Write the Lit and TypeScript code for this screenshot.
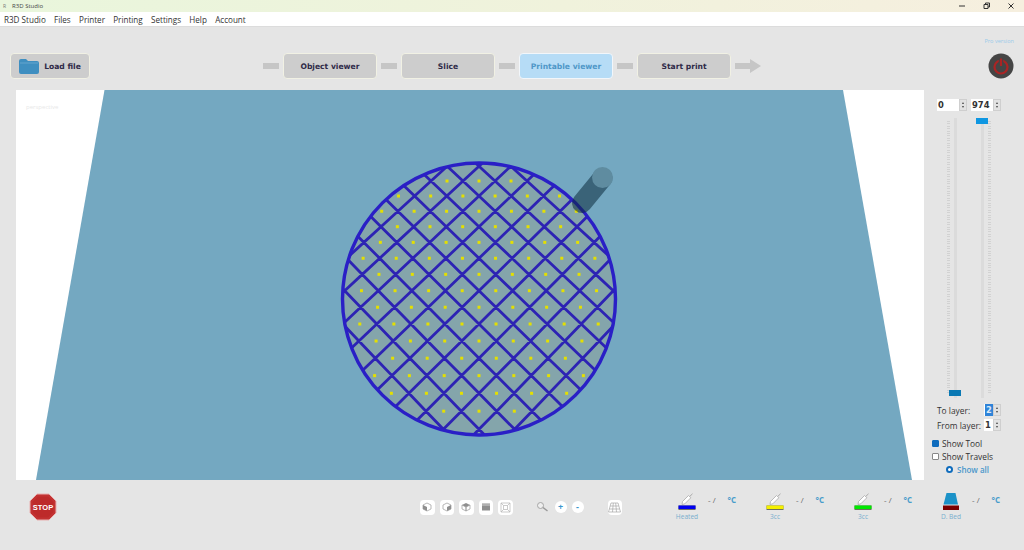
import { LitElement, css, html, svg } from "lit";
import { customElement } from "lit/decorators.js";

const steps = [
  { label: "Object viewer" },
  { label: "Slice" },
  { label: "Printable viewer", active: true },
  { label: "Start print" },
];

const tools = [
  { label: "Heated", bar: "#0000f0" },
  { label: "3cc", bar: "#f4f000" },
  { label: "3cc", bar: "#00e800" },
];

// grid of the printed layer, rows run from the far side to the near side
const rowY = (r: number) => 181 + 14.9 * r + 0.11 * r * r;
const stepX = (y: number) => 16 + (y - 181) * 0.0072;
const gridX = (m: number, y: number) => 479 + m * stepX(y);

const dotRows: [number, number][] = [
  [0, 2], [1, 5], [2, 6], [3, 5], [4, 6], [5, 7], [6, 6], [7, 7],
  [8, 6], [9, 7], [10, 6], [11, 5], [12, 6], [13, 5], [14, 2],
];

function dots() {
  const out: { x: number; y: number }[] = [];
  for (const [r, n] of dotRows) {
    const y = rowY(r);
    for (let m = -n; m <= n; m++) {
      if ((m + r) % 2 === 0) out.push({ x: gridX(m, y), y });
    }
  }
  return out;
}

function gridPath() {
  let d = "";
  for (let c = -26; c <= 26; c += 2) {
    const pts: string[] = [];
    const pts2: string[] = [];
    for (let r = -3; r <= 17; r++) {
      const y = rowY(r);
      pts.push(`${gridX(c + 7 - r, y).toFixed(1)} ${y.toFixed(1)}`);
      pts2.push(`${gridX(c - 7 + r, y).toFixed(1)} ${y.toFixed(1)}`);
    }
    d += `M${pts.join("L")}M${pts2.join("L")}`;
  }
  return d;
}

@customElement("app-root")
export class AppRoot extends LitElement {
  static styles = css`
    :host {
      display: block;
      width: 1024px;
      height: 550px;
      overflow: hidden;
      background: #e5e5e5;
      font-family: "Open Sans", "Noto Sans", sans-serif;
      color: #2c2c2c;
    }

    .title {
      height: 12px;
      display: flex;
      align-items: center;
      padding-left: 3px;
      gap: 6px;
      font-size: 6px;
      color: #444;
      background: linear-gradient(90deg, #e9f6dc, #f0f2dc 55%, #f6efdf);
    }
    .title .r {
      font-size: 5px;
      color: #777;
    }
    .win {
      margin-left: auto;
      display: flex;
      align-items: center;
      gap: 18px;
      padding-right: 10px;
      height: 12px;
    }
    .win svg {
      display: block;
    }

    .menu {
      height: 14px;
      display: flex;
      align-items: center;
      gap: 8.3px;
      padding-left: 4px;
      background: #fff;
      font-size: 8.1px;
      color: #333;
      border-bottom: 1px solid #dcdcdc;
    }

    .toolbar {
      box-sizing: border-box;
      height: 63px;
      display: flex;
      align-items: flex-start;
      padding: 26px 0 0 10px;
      position: relative;
    }
    .btn {
      box-sizing: border-box;
      height: 26px;
      display: flex;
      align-items: center;
      justify-content: center;
      background: #cdcdcd;
      border: 1px solid #f1f1e4;
      border-radius: 4px;
      font-family: "DejaVu Sans", sans-serif;
      font-size: 7.6px;
      font-weight: 700;
      color: #2f2a48;
    }
    .load {
      width: 80px;
      gap: 5px;
      margin-right: 169px;
    }
    .step {
      width: 94px;
    }
    .step.active {
      background: #b6dcf6;
      color: #4f97c8;
      border-color: #f2f6fa;
    }
    .link {
      width: 16px;
      height: 6px;
      margin: 10px 4px 0;
      background: #c6c6c6;
    }
    .arrow {
      margin: 6px 0 0 4px;
      display: block;
    }
    .pro {
      position: absolute;
      right: 10px;
      top: 10px;
      font-size: 5.6px;
      color: #9bcbea;
    }
    .power {
      position: absolute;
      left: 988px;
      top: 26px;
    }

    .main {
      display: flex;
      height: 390px;
      padding-left: 16px;
    }
    .view {
      position: relative;
      width: 908px;
      height: 390px;
      background: #fff;
    }
    .view svg {
      display: block;
    }
    .persp {
      position: absolute;
      left: 10px;
      top: 13px;
      font-size: 6px;
      color: #e8e8e8;
    }

    .side {
      width: 100px;
      box-sizing: border-box;
      padding: 9px 0 0 13px;
      font-size: 8.4px;
      color: #333;
    }
    .spins {
      display: flex;
      gap: 4px;
    }
    .spin {
      display: flex;
      width: 30px;
      height: 12px;
      background: #fff;
      font-family: "DejaVu Sans", sans-serif;
      font-weight: 700;
      font-size: 8.4px;
      line-height: 12px;
      padding-left: 1px;
      box-sizing: border-box;
    }
    .spin .val {
      flex: 1;
    }
    .arrows {
      width: 8px;
      height: 12px;
      background: #e2e2e2;
      border: 1px solid #cfcfcf;
      box-sizing: border-box;
      display: flex;
      flex-direction: column;
      align-items: center;
      justify-content: space-around;
      padding: 1px 0;
    }
    .arrows i {
      width: 0;
      height: 0;
      border-left: 1.5px solid transparent;
      border-right: 1.5px solid transparent;
    }
    .arrows i.up {
      border-bottom: 2px solid #444;
    }
    .arrows i.down {
      border-top: 2px solid #444;
    }

    .sliders {
      display: flex;
      gap: 15px;
      padding: 7px 0 0 12px;
    }
    .slider {
      position: relative;
      width: 12px;
      height: 280px;
    }
    .slider .track {
      position: absolute;
      left: 4.5px;
      top: 0;
      bottom: 0;
      width: 3px;
      background: #dbdbdb;
    }
    .slider .ticks {
      position: absolute;
      top: 3px;
      bottom: 3px;
      width: 3px;
      background: repeating-linear-gradient(#d2d2d2 0 1px, transparent 1px 2.4px);
    }
    .ticks.l {
      left: -2px;
    }
    .ticks.r {
      left: 12px;
    }
    .handle {
      position: absolute;
      left: 0;
      width: 12px;
      height: 6px;
    }

    .layer {
      display: flex;
      align-items: center;
      height: 12px;
      margin-top: 3px;
    }
    .layer .spin {
      margin-left: auto;
      margin-right: 23px;
      width: 17px;
    }
    .sel {
      background: #2f83d8;
      color: #dbe9f7;
      width: 6px;
      text-align: center;
    }
    .layers {
      padding-top: 3px;
    }
    .check {
      display: flex;
      align-items: center;
      gap: 3px;
      height: 13px;
      margin-left: -5px;
    }
    .box {
      width: 7px;
      height: 7px;
      border: 1px solid #888;
      border-radius: 1px;
      box-sizing: border-box;
      background: #fff;
    }
    .box.on {
      background: #0f6cbd;
      border-color: #0f6cbd;
    }
    .checks {
      padding-top: 6px;
    }
    .all {
      display: flex;
      align-items: center;
      gap: 4px;
      height: 13px;
      margin-left: 9px;
      font-size: 8px;
      font-weight: 600;
      color: #4a97cb;
    }
    .radio {
      width: 7px;
      height: 7px;
      border-radius: 50%;
      box-sizing: border-box;
      border: 2px solid #0f6cbd;
      background: #fff;
    }

    .bottom {
      height: 70px;
      display: flex;
      align-items: flex-start;
      padding-top: 13px;
      box-sizing: border-box;
    }
    .stop {
      flex: none;
      margin-left: 29px;
      margin-right: 363px;
      display: block;
    }
    .icons {
      flex: none;
      display: flex;
      align-items: center;
      gap: 5px;
      padding-top: 7px;
      width: 260px;
    }
    .icon {
      width: 14.5px;
      height: 14.5px;
      border-radius: 4px;
      background: #fff;
      display: flex;
      align-items: center;
      justify-content: center;
      flex: none;
    }
    .icon.round {
      width: 12px;
      height: 12px;
      border-radius: 50%;
      color: #3c97cc;
      font-weight: 700;
      font-size: 9px;
      line-height: 12px;
    }
    .zoom {
      flex: none;
      margin-left: 18px;
      margin-right: 2px;
    }
    .grid {
      margin-left: 19px;
    }

    .temps {
      display: flex;
      flex: none;
    }
    .temp {
      flex: none;
      width: 88px;
      display: flex;
      align-items: flex-start;
      font-size: 6.6px;
      color: #79aece;
    }
    .temp .tool {
      flex: none;
      width: 40px;
      margin-left: -13px;
      display: flex;
      flex-direction: column;
      align-items: center;
    }
    .temp svg {
      display: block;
    }
    .temp .lbl {
      margin-top: 1px;
      line-height: 9px;
    }
    .temp .read {
      display: flex;
      gap: 12px;
      padding-top: 1px;
      font-size: 8px;
      width: 50px;
      margin-left: 1px;
    }
    .read .dash {
      color: #6a6a6a;
      white-space: pre;
    }
    .read .deg {
      color: #4a9ccb;
      font-weight: 700;
    }
  `;

  private spin(value: string, selected = false) {
    return html`<div class="spin">
      <span class="val ${selected ? "sel" : ""}">${value}</span>
      <span class="arrows"><i class="up"></i><i class="down"></i></span>
    </div>`;
  }

  private slider(top: number, color: string, side: string) {
    return html`<div class="slider">
      <div class="track"></div>
      <div class="ticks ${side}"></div>
      <div class="handle" style="top:${top}px;background:${color}"></div>
    </div>`;
  }

  private scene() {
    return html`<svg width="908" height="390" viewBox="16 90 908 390">
      <defs>
        <clipPath id="plate"><ellipse cx="479" cy="299" rx="136" ry="135.5"></ellipse></clipPath>
      </defs>
      <polygon points="104.500,90 843,90 912,480 36,480" fill="#74a8c1"></polygon>
      <ellipse cx="479" cy="299" rx="136" ry="135.500" fill="#84a5ab"></ellipse>
      <path
        d=${gridPath()}
        clip-path="url(#plate)"
        fill="none"
        stroke="#2d23b4"
        stroke-width="2.800"
      ></path>
      <ellipse
        cx="479"
        cy="299"
        rx="136.500"
        ry="136"
        fill="none"
        stroke="#2a1fc6"
        stroke-width="3.400"
      ></ellipse>
      ${dots().map(
        (d) => svg`<rect x=${d.x - 1.5} y=${d.y - 1.5} width="3" height="3" fill="#e4e000"></rect>`
      )}
      <path
        d="M602.500 178L582 203"
        stroke="#0b2a3c"
        stroke-opacity="0.55"
        stroke-width="20"
        stroke-linecap="round"
        fill="none"
      ></path>
      <ellipse cx="602.500" cy="177.500" rx="10.500" ry="10.500" fill="#5f8ca0"></ellipse>
    </svg>`;
  }

  render() {
    return html`
      <div class="title">
        <span class="r">R</span><span>R3D Studio</span>
        <div class="win">
          <svg width="6" height="8" viewBox="0 0 6 8"><path d="M0 4H6" stroke="#333" fill="none"></path></svg>
          <svg width="7" height="8" viewBox="0 0 7 8">
            <path d="M1 2.500H5V6.500H1ZM2.500 2.500V1H6.500V5H5" stroke="#333" fill="none"></path>
          </svg>
          <svg width="6" height="8" viewBox="0 0 6 8"><path d="M.5 1.500L5.500 6.500M5.500 1.500L.5 6.500" stroke="#333" fill="none"></path></svg>
        </div>
      </div>
      <div class="menu">
        ${["R3D Studio", "Files", "Printer", "Printing", "Settings", "Help", "Account"].map(
          (m) => html`<span>${m}</span>`
        )}
      </div>

      <div class="toolbar">
        <div class="btn load">
          <svg width="20" height="16" viewBox="0 0 20 16">
            <path d="M0 3Q0 1 2 1H7L9 3H18Q20 3 20 5V14Q20 16 18 16H2Q0 16 0 14Z" fill="#3f8fc0"></path>
            <path d="M1 5H19" stroke="#7db5d6" stroke-width=".6"></path>
          </svg>
          <span>Load file</span>
        </div>
        ${steps.map(
          (s) => html`<div class="link"></div>
            <div class="btn step ${s.active ? "active" : ""}">${s.label}</div>`
        )}
        <svg class="arrow" width="26" height="14" viewBox="0 0 26 14">
          <path d="M0 4H15V0L26 7L15 14V10H0Z" fill="#c6c6c6"></path>
        </svg>
        <div class="pro">Pro version</div>
        <svg class="power" width="26" height="26" viewBox="0 0 26 26">
          <circle cx="13" cy="13" r="12.500" fill="#454545"></circle>
          <circle cx="13" cy="14" r="6.500" fill="none" stroke="#ab2424" stroke-width="2.200"></circle>
          <path d="M13 5.500V13" stroke="#454545" stroke-width="4.500"></path>
          <path d="M13 5.500V13" stroke="#ab2424" stroke-width="2.200"></path>
        </svg>
      </div>

      <div class="main">
        <div class="view">
          ${this.scene()}
          <div class="persp">perspective</div>
        </div>
        <div class="side">
          <div class="spins">${this.spin("0")}${this.spin("974")}</div>
          <div class="sliders">
            ${this.slider(272, "#0a79b4", "l")}${this.slider(0, "#0f97e2", "r")}
          </div>
          <div class="layers">
            <div class="layer"><span>To layer:</span>${this.spin("2", true)}</div>
            <div class="layer"><span>From layer:</span>${this.spin("1")}</div>
          </div>
          <div class="checks">
            <div class="check"><span class="box on"></span>Show Tool</div>
            <div class="check"><span class="box"></span>Show Travels</div>
            <div class="all"><span class="radio"></span>Show all</div>
          </div>
        </div>
      </div>

      <div class="bottom">
        <svg class="stop" width="28" height="28" viewBox="0 0 28 28">
          <polygon points="8,1 20,1 27,8 27,20 20,27 8,27 1,20 1,8" fill="#c23232" stroke="#e8b0b0"></polygon>
          <polygon points="9,3.500 19,3.500 24.500,9 24.500,19 19,24.500 9,24.500 3.500,19 3.500,9" fill="#bd2a2a"></polygon>
          <text x="14" y="16.500" text-anchor="middle" font-family="Liberation Sans" font-weight="700" font-size="7.500" fill="#fff">STOP</text>
        </svg>
        <div class="icons">
          <div class="icon">
            <svg width="10" height="10" viewBox="0 0 10 10">
              <path d="M1 3L5 1L9 3V7L5 9L1 7Z" fill="#fff" stroke="#999" stroke-width=".7"></path>
              <path d="M1 3L5 5V9L1 7Z" fill="#8f8f8f"></path>
            </svg>
          </div>
          <div class="icon">
            <svg width="10" height="10" viewBox="0 0 10 10">
              <path d="M1 3L5 1L9 3V7L5 9L1 7Z" fill="#fff" stroke="#999" stroke-width=".7"></path>
              <path d="M9 3L5 5V9L9 7Z" fill="#8f8f8f"></path>
            </svg>
          </div>
          <div class="icon">
            <svg width="10" height="10" viewBox="0 0 10 10">
              <path d="M1 3L5 5V9L1 7ZM9 3L5 5V9L9 7Z" fill="#fff" stroke="#999" stroke-width=".7"></path>
              <path d="M1 3L5 1L9 3L5 5Z" fill="#8f8f8f"></path>
            </svg>
          </div>
          <div class="icon">
            <svg width="10" height="10" viewBox="0 0 10 10">
              <rect x="1" y="1.500" width="8" height="7" fill="#8f8f8f"></rect>
              <path d="M1 3H9" stroke="#fff" stroke-width=".6"></path>
            </svg>
          </div>
          <div class="icon">
            <svg width="13" height="13" viewBox="0 0 13 13">
              <path
                d="M2 2H11V11H2ZM4.500 4.500H8.500V8.500H4.500ZM2 2L4.500 4.500M11 2L8.500 4.500M2 11L4.500 8.500M11 11L8.500 8.500"
                fill="none"
                stroke="#b5b5b5"
                stroke-width=".7"
              ></path>
            </svg>
          </div>
          <svg class="zoom" width="12" height="12" viewBox="0 0 12 12">
            <circle cx="4.500" cy="4.500" r="3" fill="#eee" stroke="#a5a5a5"></circle>
            <path d="M7 6.500L11.500 10" stroke="#999" stroke-width="1.400"></path>
          </svg>
          <div class="icon round">+</div>
          <div class="icon round">-</div>
          <div class="icon grid">
            <svg width="13" height="11" viewBox="0 0 13 11">
              <path
                d="M3 1H10L12.500 10H.5ZM5.300 1L4.500 10M7.700 1L8.500 10M2.200 4H10.800M1.400 7H11.600"
                fill="none"
                stroke="#a8a8a8"
                stroke-width=".7"
              ></path>
            </svg>
          </div>
        </div>
        <div class="temps">
          ${tools.map(
            (t) => html`<div class="temp">
              <div class="tool">
                <svg width="18" height="18" viewBox="0 0 18 18">
                  <path d="M4 11.500L4.500 8.500L10.500 2.500L12.800 4.800L6.800 10.800Z" fill="#fff" stroke="#a9a9a9" stroke-width=".8"></path>
                  <path d="M12 3.200L14.500 .8" stroke="#999" stroke-width=".8"></path>
                  <rect x="0.500" y="12.500" width="17" height="4.500" fill="#6f6f5f"></rect>
                  <rect x="0.500" y="12.500" width="17" height="3.500" fill=${t.bar}></rect>
                </svg>
                <span class="lbl">${t.label}</span>
              </div>
              <div class="read"><span class="dash">- /</span><span class="deg">°C</span></div>
            </div>`
          )}
          <div class="temp">
            <div class="tool">
              <svg width="18" height="18" viewBox="0 0 18 18">
                <path d="M4.500 0H13.500L16 11.500H1.500Z" fill="#1b92c8"></path>
                <rect x="1" y="12.500" width="16" height="4.500" fill="#7a0000"></rect>
              </svg>
              <span class="lbl">D. Bed</span>
            </div>
            <div class="read"><span class="dash">- /</span><span class="deg">°C</span></div>
          </div>
        </div>
      </div>
    `;
  }
}
